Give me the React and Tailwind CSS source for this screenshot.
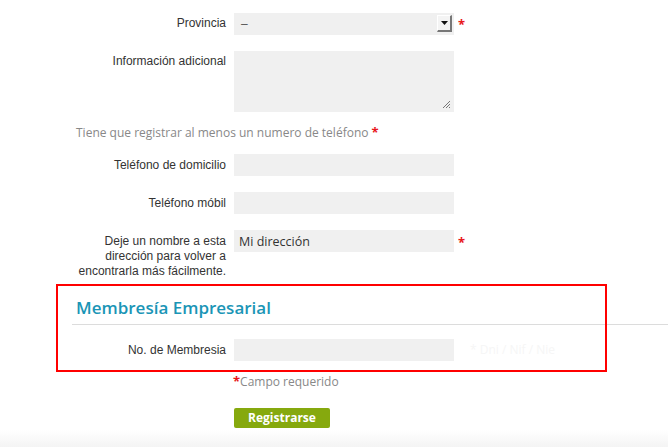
import React from 'react'

const labelCls = "w-[226px] shrink-0 text-right text-[12px] leading-[15px] text-[#333] font-['Liberation_Sans',Arial,sans-serif]"
const inputCls = "w-[220px] h-[22px] bg-[#f0f0f0] outline-none px-1 text-[12.5px] text-[#333] font-['Open_Sans',sans-serif]"

function Star() {
  return <span className="text-[#e8161b] text-[13px] leading-none font-bold">*</span>
}

function Row({ label, children, className = '' }) {
  return (
    <div className={`flex gap-2 items-center ${className}`}>
      <label className={labelCls}>{label}</label>
      {children}
    </div>
  )
}

export default function App() {
  return (
    <div className="relative w-[668px] h-[447px] overflow-hidden bg-white">
      <div className="pt-3">
        {/* provincia */}
        <div className="flex gap-2 items-center">
          <label className={labelCls}>Provincia</label>
          <div className="w-[220px] h-[22px] bg-[#f0f0f0] flex items-center justify-between pl-[7px] pr-[2px]">
            <span className="text-[12px] text-[#555] font-['Liberation_Sans',sans-serif]">–</span>
            <div className="w-[15px] h-[17px] bg-[#f4f4f4] border-r-2 border-b-2 border-[#777] border-t border-l border-t-white border-l-white flex items-center justify-center">
              <svg width="7" height="4" viewBox="0 0 7 4"><path d="M0 0h7L3.5 4z" fill="#111" /></svg>
            </div>
          </div>
          <span className="self-start -mt-[1px] -ml-[4px]"><Star /></span>
        </div>

        {/* info adicional */}
        <div className="flex gap-2 items-start mt-4">
          <label className={`${labelCls} pt-[3px]`}>Información adicional</label>
          <div className="relative w-[220px] h-[61px] bg-[#f0f0f0]">
            <svg className="absolute right-[3px] bottom-[3px]" width="10" height="10" viewBox="0 0 10 10">
              <path d="M9 2L2 9M9 5L5 9M9 8L8 9" stroke="#777" strokeWidth="1" />
            </svg>
          </div>
        </div>

        <p className="mt-3 ml-[76px] text-[12px] leading-[18px] text-[#888] font-['Open_Sans',sans-serif]">
          Tiene que registrar al menos un numero de teléfono <Star />
        </p>

        <Row label="Teléfono de domicilio" className="mt-3">
          <input className={inputCls} />
        </Row>
        <Row label="Teléfono móbil" className="mt-4">
          <input className={inputCls} />
        </Row>

        <div className="flex gap-2 items-start mt-4">
          <label className={`${labelCls} pt-[4px] leading-[14.5px] pl-[78px]`}>
            Deje un nombre a esta dirección para volver a encontrarla más fácilmente.
          </label>
          <input className={`${inputCls} px-[5px]`} defaultValue="Mi dirección" />
          <span className="-mt-[1px] -ml-[4px]"><Star /></span>
        </div>

        {/* membresía */}
        <h2 className="mt-[17px] ml-[76px] text-[17px] leading-[24px] font-semibold text-[#1a95b6] font-['Open_Sans',sans-serif]">
          Membresía Empresarial
        </h2>
        <div className="mt-1 ml-[72px] border-t border-[#dcdcdc]" />

        <div className="flex gap-2 items-center mt-[14px]">
          <label className={labelCls}>No. de Membresia</label>
          <input className={inputCls} />
          <span className="text-[12px] text-[#f6f6f6] font-['Open_Sans',sans-serif] ml-2">* Dni / Nif / Nie</span>
        </div>

        <p className="mt-3 ml-[233px] text-[12px] leading-[18px] text-[#888] font-['Open_Sans',sans-serif]">
          <Star />Campo requerido
        </p>

        <button className="block mt-[17px] ml-[234px] w-[96px] h-[20px] rounded-[2px] bg-[#86a90e] text-white text-[12px] font-bold font-['Open_Sans',sans-serif] leading-[20px]">
          Registrarse
        </button>
      </div>

      <div className="absolute left-0 right-0 bottom-0 h-[17px] bg-gradient-to-b from-white to-[#f4f4f4]" />

      {/* annotation box */}
      <div className="absolute left-[56px] top-[284px] w-[551px] h-[88px] border-2 border-[#ff0000] pointer-events-none" />
    </div>
  )
}
